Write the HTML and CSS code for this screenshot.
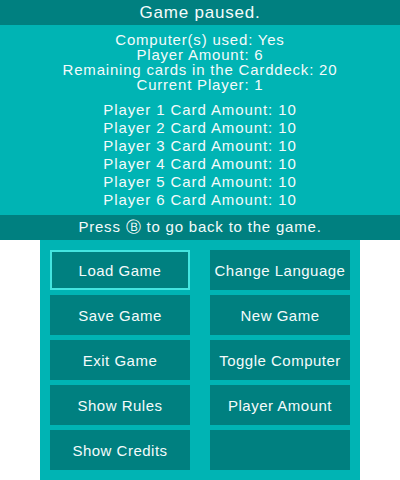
FILE: index.html
```html
<!DOCTYPE html>
<html>
<head>
<meta charset="utf-8">
<link rel="stylesheet" href="styles.css">
</head>
<body>
<div class="screen-top">
  <div class="bar title">Game paused.</div>
  <div class="info">
    <div class="stats">
      <div>Computer(s) used: Yes</div>
      <div>Player Amount: 6</div>
      <div>Remaining cards in the Carddeck: 20</div>
      <div>Current Player: 1</div>
    </div>
    <div class="players">
      <div>Player 1 Card Amount: 10</div>
      <div>Player 2 Card Amount: 10</div>
      <div>Player 3 Card Amount: 10</div>
      <div>Player 4 Card Amount: 10</div>
      <div>Player 5 Card Amount: 10</div>
      <div>Player 6 Card Amount: 10</div>
    </div>
  </div>
  <div class="bar hint">Press Ⓑ to go back to the game.</div>
</div>
<div class="screen-bottom">
  <div class="menu">
    <div class="btn selected">Load Game</div>
    <div class="btn">Change Language</div>
    <div class="btn">Save Game</div>
    <div class="btn">New Game</div>
    <div class="btn">Exit Game</div>
    <div class="btn">Toggle Computer</div>
    <div class="btn">Show Rules</div>
    <div class="btn">Player Amount</div>
    <div class="btn">Show Credits</div>
    <div class="btn"></div>
  </div>
</div>
</body>
</html>
```
FILE: styles.css
```css
html, body {
  margin: 0;
  padding: 0;
  background: #ffffff;
}
body {
  width: 400px;
  height: 480px;
  font-family: "Liberation Sans", Arial, sans-serif;
  color: #f4fbfb;
  font-size: 15px;
}
.screen-top {
  width: 400px;
  height: 240px;
  display: flex;
  flex-direction: column;
  background: #00b4b4;
}
.bar {
  height: 25px;
  background: #008080;
  display: flex;
  align-items: center;
  justify-content: center;
}
.title {
  font-size: 17px;
  letter-spacing: 0.8px;
}
.hint {
  letter-spacing: 0.8px;
}
.info {
  flex: 1;
  display: flex;
  flex-direction: column;
  align-items: center;
  padding-top: 7px;
  text-align: center;
}
.stats {
  line-height: 15px;
  letter-spacing: 0.8px;
}
.players {
  margin-top: 9px;
  line-height: 18px;
  letter-spacing: 0.9px;
}
.screen-bottom {
  width: 320px;
  height: 240px;
  margin: 0 40px;
  box-sizing: border-box;
  background: #00b4b4;
  padding: 10px;
}
.menu {
  display: grid;
  grid-template-columns: 140px 140px;
  grid-auto-rows: 40px;
  column-gap: 20px;
  row-gap: 5px;
}
.btn {
  background: #008080;
  display: flex;
  align-items: center;
  justify-content: center;
  letter-spacing: 0.5px;
  box-sizing: border-box;
}
.btn.selected {
  border: 2px solid #44e4e0;
}
```
